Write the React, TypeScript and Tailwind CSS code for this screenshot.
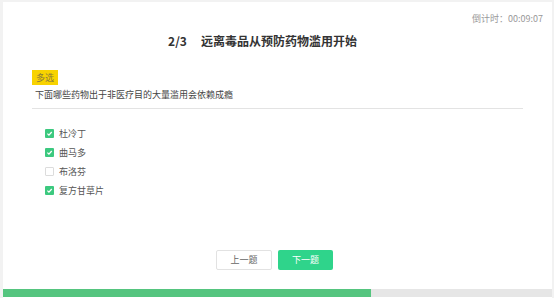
import React from 'react';

const font = { fontFamily: '"Microsoft YaHei", "Noto Sans CJK SC", "Noto Sans", sans-serif' };

interface Option {
    label: string;
    checked: boolean;
}

const options: Option[] = [
    { label: '杜冷丁', checked: true },
    { label: '曲马多', checked: true },
    { label: '布洛芬', checked: false },
    { label: '复方甘草片', checked: true },
];

const CheckBox = ({ checked }: { checked: boolean }) =>
    checked ? (
        <span className="w-[9px] h-[9px] rounded-[1px] bg-[#3cc97f] flex items-center justify-center shrink-0">
            <svg width="7" height="7" viewBox="0 0 10 10">
                <path d="M2 5.2 L4.2 7.3 L8.2 2.8" fill="none" stroke="#fff" strokeWidth="1.8" />
            </svg>
        </span>
    ) : (
        <span className="w-[9px] h-[9px] rounded-[1px] border border-[#dcdcdc] bg-white shrink-0" />
    );

export default function App() {
    return (
        <div className="w-[554px] h-[298px] bg-[#f2f2f2] pl-[3px] pt-[2px] pr-[2px]" style={font}>
            <div className="h-[296px] bg-white flex flex-col">
                {/* Timer */}
                <div className="pt-[11px] pr-[9px] text-right text-[9px] leading-[12px] text-[#999]">
                    倒计时：00:09:07
                </div>

                {/* Title */}
                <div className="mt-[8px] pr-[30px] flex justify-center items-center gap-[14px] text-[12px] leading-[16px] font-bold text-[#333]">
                    <span>2/3</span>
                    <span>远离毒品从预防药物滥用开始</span>
                </div>

                {/* Question */}
                <div className="px-[29px] mt-[21px]">
                    <span className="block w-[26px] h-[15px] bg-[#f8d300] text-[9px] leading-[15px] text-center text-[#8a7a3a]">
                        多选
                    </span>
                    <div className="mt-[4px] pb-[7px] border-b border-[#e3e3e3] text-[9px] leading-[12px] text-[#444] pl-[3px]">
                        下面哪些药物出于非医疗目的大量滥用会依赖成瘾
                    </div>

                    <div className="mt-[15px] pl-[13px] flex flex-col">
                        {options.map(o => (
                            <div key={o.label} className="h-[19px] flex items-center gap-[5px]">
                                <CheckBox checked={o.checked} />
                                <span className="text-[9px] leading-[12px] text-[#555]">{o.label}</span>
                            </div>
                        ))}
                    </div>
                </div>

                {/* Buttons */}
                <div className="mt-auto pr-[6px] flex justify-center gap-[6px]">
                    <button className="w-[56px] h-[20px] border border-[#e2e2e2] rounded-[2px] bg-white text-[9px] text-[#666]">
                        上一题
                    </button>
                    <button className="w-[55px] h-[20px] rounded-[2px] bg-[#2fd48b] text-[9px] text-white">
                        下一题
                    </button>
                </div>

                {/* Progress */}
                <div className="mt-[19px] mb-[1px] h-[8px] bg-[#e6e6e6] flex">
                    <div className="w-[368px] h-full bg-[#55c57f]" />
                </div>
            </div>
        </div>
    );
}
